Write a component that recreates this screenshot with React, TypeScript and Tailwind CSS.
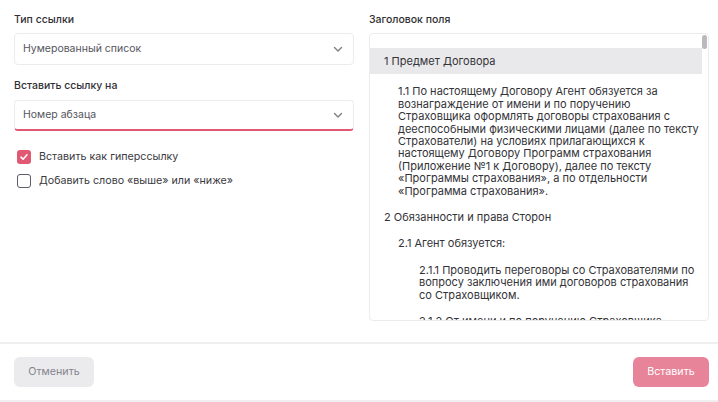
import { useState } from 'react';

interface Clause {
  id: string;
  level: number;
  lines: string[];
}

// Clause text is kept pre-broken so each row wraps the same way in every font
const clauses: Clause[] = [
  { id: '1', level: 0, lines: ['1 Предмет Договора'] },
  {
    id: '1.1',
    level: 1,
    lines: [
      '1.1 По настоящему Договору Агент обязуется за',
      'вознаграждение от имени и по поручению',
      'Страховщика оформлять договоры страхования с',
      'дееспособными физическими лицами (далее по тексту',
      'Страхователи) на условиях прилагающихся к',
      'настоящему Договору Программ страхования',
      '(Приложение №1 к Договору), далее по тексту',
      '«Программы страхования», а по отдельности',
      '«Программа страхования».',
    ],
  },
  { id: '2', level: 0, lines: ['2 Обязанности и права Сторон'] },
  { id: '2.1', level: 1, lines: ['2.1 Агент обязуется:'] },
  {
    id: '2.1.1',
    level: 2,
    lines: [
      '2.1.1 Проводить переговоры со Страхователями по',
      'вопросу заключения ими договоров страхования',
      'со Страховщиком.',
    ],
  },
  {
    id: '2.1.2',
    level: 2,
    lines: ['2.1.2 От имени и по поручению Страховщика', 'оформлять договоры страхования'],
  },
];

const indent = ['pl-[14px]', 'pl-[28px]', 'pl-[49px]'];

function Chevron() {
  return (
    <svg width="12" height="12" viewBox="0 0 12 12" fill="none" className="text-[#7d7d85]">
      <path d="M2.5 4.5 6 8l3.5-3.5" stroke="currentColor" strokeWidth="1.4" strokeLinecap="round" strokeLinejoin="round" />
    </svg>
  );
}

function Select({ value, active }: { value: string; active?: boolean }) {
  return (
    <div
      className={`flex items-center justify-between rounded-[4px] border border-[#ececee] pl-[8px] pr-[9px] text-[10.5px] text-[#55555c] ${
        active ? 'h-[31px] border-b-2 border-b-[#e05872]' : 'h-[32px]'
      }`}
    >
      <span>{value}</span>
      <Chevron />
    </div>
  );
}

function Checkbox({ checked, label, onChange }: { checked: boolean; label: string; onChange: () => void }) {
  return (
    <label className="flex h-[14px] cursor-pointer items-center gap-[8px] pl-[3px] text-[10.7px] leading-[14px] text-[#3a3a40]">
      {checked ? (
        <span className="flex h-[14px] w-[14px] items-center justify-center rounded-[3px] bg-[#e05872]">
          <svg width="10" height="10" viewBox="0 0 10 10" fill="none">
            <path d="M2 5.2 4.1 7.2 8 2.8" stroke="white" strokeWidth="1.6" strokeLinecap="round" strokeLinejoin="round" />
          </svg>
        </span>
      ) : (
        <span className="h-[14px] w-[14px] rounded-[3px] border-[1.5px] border-[#5c5c66]" />
      )}
      <input type="checkbox" className="hidden" checked={checked} onChange={onChange} />
      {label}
    </label>
  );
}

export default function App() {
  const [asLink, setAsLink] = useState(true);
  const [addWord, setAddWord] = useState(false);
  const [selected] = useState('1');

  return (
    <div className="flex h-[402px] w-[718px] flex-col bg-white font-['Inter',sans-serif]">
      <div className="grid h-[342px] grid-cols-2 gap-[15px] pl-[14px] pr-[9px] pt-[13px]">
        <div className="flex flex-col">
          <div className="mb-[6px] text-[10.5px] font-medium leading-[14px] text-[#2f2f35]">Тип ссылки</div>
          <Select value="Нумерованный список" />
          <div className="mb-[7px] mt-[14px] text-[10.5px] font-medium leading-[14px] text-[#2f2f35]">Вставить ссылку на</div>
          <Select value="Номер абзаца" active />
          <div className="mt-[19px] flex flex-col gap-[10px]">
            <Checkbox checked={asLink} label="Вставить как гиперссылку" onChange={() => setAsLink(!asLink)} />
            <Checkbox checked={addWord} label="Добавить слово «выше» или «ниже»" onChange={() => setAddWord(!addWord)} />
          </div>
        </div>

        <div className="flex flex-col">
          <div className="mb-[6px] text-[10.5px] font-medium leading-[14px] text-[#2f2f35]">Заголовок поля</div>
          <div className="relative h-[288px] overflow-hidden rounded-[4px] border border-[#ececee]">
            <div className="pr-[6px] pt-[14px]">
              {clauses.map((c, i) => (
                <div
                  key={c.id}
                  className={`${indent[c.level]} whitespace-nowrap py-[7px] text-[11px] leading-[12.4px] text-[#333338] ${
                    c.id === selected ? 'bg-[#e9e9eb]' : ''
                  } ${i === 1 ? 'mt-[4px]' : ''}`}
                >
                  {c.lines.map((line) => (
                    <div key={line}>{line}</div>
                  ))}
                </div>
              ))}
            </div>
            <div className="absolute right-[1px] top-[1px] h-[14px] w-[5px] rounded-full bg-[#b9b9be]" />
          </div>
        </div>
      </div>

      <div className="flex flex-1 items-start justify-between border-y-2 border-[#efeff1] pl-[14px] pr-[9px] pt-[13px]">
        <button className="h-[30px] w-[80px] rounded-[6px] bg-[#ebebed] text-[10.7px] text-[#85858c]">Отменить</button>
        <button className="h-[30px] w-[76px] rounded-[6px] bg-[#e8849a] text-[10.7px] text-white">Вставить</button>
      </div>
    </div>
  );
}
